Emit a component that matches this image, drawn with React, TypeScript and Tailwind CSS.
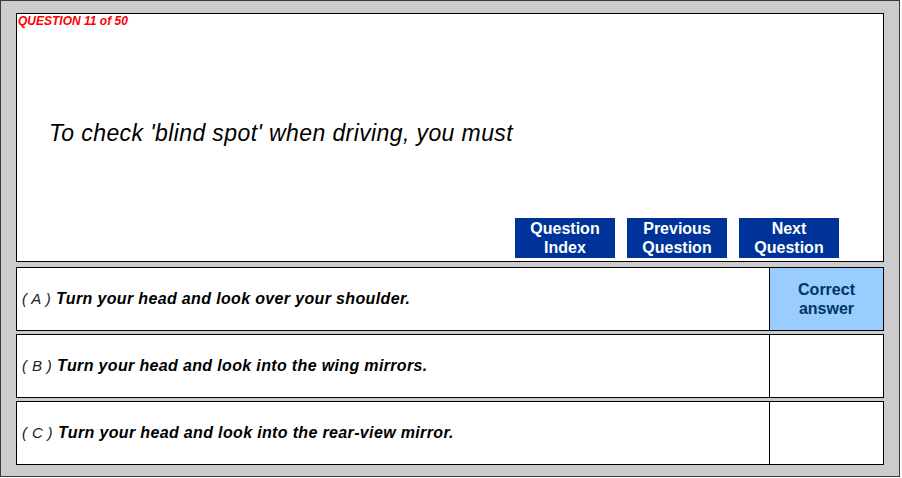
import React from "react";

interface IOption {
  letter: string;
  text: string;
  correct: boolean;
}

const options: IOption[] = [
  { letter: "A", text: "Turn your head and look over your shoulder.", correct: true },
  { letter: "B", text: "Turn your head and look into the wing mirrors.", correct: false },
  { letter: "C", text: "Turn your head and look into the rear-view mirror.", correct: false },
];

const navButtons = [
  ["Question", "Index"],
  ["Previous", "Question"],
  ["Next", "Question"],
];

const App: React.FunctionComponent = () => {
  return (
    <div
      className="w-[900px] h-[477px] border border-[#3a3a3a] bg-[#cccccc] px-[15px] pt-[12px]"
      style={{ fontFamily: '"Liberation Sans", Arial, sans-serif' }}
    >
      {/* question panel */}
      <div className="flex flex-col h-[249px] border border-black bg-white">
        <div className="pl-[1px] text-[12px] leading-[14px] font-bold italic text-[#ff0000]">
          QUESTION 11 of 50
        </div>
        <p className="mt-[91px] pl-[32px] text-[23px] leading-[28px] tracking-[0.4px] italic text-black">
          To check 'blind spot' when driving, you must
        </p>
        <div className="mt-auto flex justify-end gap-[12px] pr-[44px] pb-[3px]">
          {navButtons.map(([a, b]) => (
            <button
              key={a + b}
              className="w-[100px] h-[40px] bg-[#003399] text-white font-bold text-[16px] leading-[19px] flex flex-col items-center justify-center"
            >
              <span>{a}</span>
              <span>{b}</span>
            </button>
          ))}
        </div>
      </div>

      {/* answers */}
      <div className="mt-[5px] flex flex-col gap-[3px]">
        {options.map((opt) => (
          <div key={opt.letter} className="flex h-[64px] border border-black bg-white">
            <div className="flex-1 flex items-center pl-[5px] text-[16px] tracking-[0.35px] italic text-black">
              <span className="font-normal text-[#222] text-[15px] mr-[5px]">( {opt.letter} )</span>
              <span className="font-bold">{opt.text}</span>
            </div>
            <div
              className={
                opt.correct
                  ? "w-[114px] border-l border-black bg-[#99ccff] flex flex-col items-center justify-center text-[16px] leading-[19px] font-bold text-[#003366]"
                  : "w-[114px] border-l border-black"
              }
            >
              {opt.correct && (
                <>
                  <span>Correct</span>
                  <span>answer</span>
                </>
              )}
            </div>
          </div>
        ))}
      </div>
    </div>
  );
};

export default App;
